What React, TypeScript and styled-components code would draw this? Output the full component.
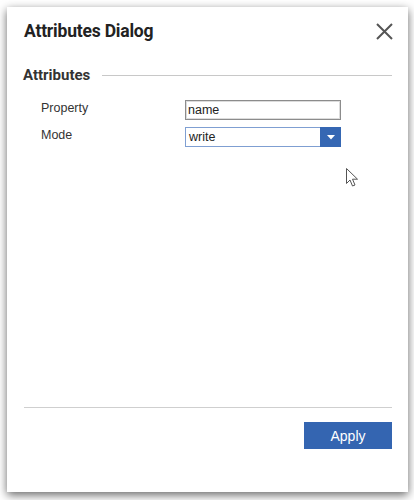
import React from "react";
import styled, { createGlobalStyle } from "styled-components";

const Global = createGlobalStyle`
  html, body { margin: 0; padding: 0; background: #ffffff; }
  body { padding: 7px 6px 8px 7px; font-family: Roboto, "Liberation Sans", Arial, sans-serif; }
  * { box-sizing: border-box; }
`;

const Dialog = styled.div`
  position: relative;
  width: 401px;
  height: 485px;
  background: #ffffff;
  box-shadow: 0 3px 9px rgba(0, 0, 0, 0.6);
  display: flex;
  flex-direction: column;
`;

const Header = styled.div`
  height: 48px;
  display: flex;
  align-items: center;
  justify-content: space-between;
  padding: 0 15px 0 17px;
`;

const Title = styled.h1`
  margin: 0;
  font-family: Roboto, "Liberation Sans", sans-serif;
  font-weight: 700;
  font-size: 17.5px;
  color: #222;
  letter-spacing: -0.2px;
`;

const CloseButton = styled.button`
  border: 0;
  background: transparent;
  padding: 0;
  width: 17px;
  height: 17px;
  display: flex;
  cursor: pointer;
`;

const Body = styled.div`
  flex: 1;
  padding: 10px 16px 0 16px;
  display: flex;
  flex-direction: column;
`;

const SectionTitleRow = styled.div`
  height: 20px;
  display: flex;
  align-items: center;
  gap: 12px;
`;

const SectionTitle = styled.h2`
  margin: 0;
  font-family: Roboto, "Liberation Sans", sans-serif;
  font-weight: 700;
  font-size: 15px;
  color: #333;
`;

const Rule = styled.div`
  flex: 1;
  height: 1px;
  background: #c8c8c8;
`;

const Form = styled.div`
  margin-top: 15px;
  padding-left: 18px;
  display: grid;
  grid-template-columns: 144px 156px;
  row-gap: 7px;
  align-items: center;
`;

const Label = styled.label`
  font-family: "Liberation Sans", Arial, sans-serif;
  font-size: 12.5px;
  color: #333;
  line-height: 20px;
  margin-top: -4px;
`;

const TextInput = styled.input`
  height: 20px;
  width: 156px;
  border: 1px solid #8c8c8c;
  box-shadow: inset 0 0 0 1px #dcdcdc;
  padding: 0 2px;
  font-family: "Liberation Sans", Arial, sans-serif;
  font-size: 12.5px;
  color: #222;
  outline: none;
`;

const Select = styled.div`
  height: 20px;
  width: 156px;
  border: 1px solid #7f9fd2;
  display: flex;
  align-items: stretch;
`;

const SelectValue = styled.div`
  flex: 1;
  padding-left: 3px;
  display: flex;
  align-items: center;
  font-family: "Liberation Sans", Arial, sans-serif;
  font-size: 12.5px;
  color: #222;
`;

const SelectArrow = styled.div`
  width: 21px;
  margin: -1px -1px -1px 0;
  background: #3567b3;
  display: flex;
  align-items: center;
  justify-content: center;
`;

const Footer = styled.div`
  display: flex;
  flex-direction: column;
  padding: 0 16px 43px 17px;
`;

const FooterRule = styled.div`
  height: 1px;
  background: #cfcfcf;
`;

const ButtonRow = styled.div`
  margin-top: 14px;
  display: flex;
  justify-content: flex-end;
`;

const PrimaryButton = styled.button`
  width: 88px;
  height: 27px;
  border: 0;
  background: #3465b1;
  color: #fff;
  font-family: "Liberation Sans", Arial, sans-serif;
  font-size: 14px;
  cursor: pointer;
`;

const Cursor = styled.svg`
  position: absolute;
  left: 339px;
  top: 161px;
`;

export default function App() {
  return (
    <>
      <Global />
      <Dialog>
        <Header>
          <Title>Attributes Dialog</Title>
          <CloseButton aria-label="Close">
            <svg width="17" height="17" viewBox="0 0 17 17">
              <path d="M1 1 L16 16 M16 1 L1 16" stroke="#555" strokeWidth="2" />
            </svg>
          </CloseButton>
        </Header>
        <Body>
          <SectionTitleRow>
            <SectionTitle>Attributes</SectionTitle>
            <Rule />
          </SectionTitleRow>
          <Form>
            <Label>Property</Label>
            <TextInput defaultValue="name" />
            <Label>Mode</Label>
            <Select>
              <SelectValue>write</SelectValue>
              <SelectArrow>
                <svg width="8" height="5" viewBox="0 0 8 5">
                  <path d="M0 0 L8 0 L4 4.5 Z" fill="#fff" />
                </svg>
              </SelectArrow>
            </Select>
          </Form>
        </Body>
        <Footer>
          <FooterRule />
          <ButtonRow>
            <PrimaryButton>Apply</PrimaryButton>
          </ButtonRow>
        </Footer>
        <Cursor width="14" height="20" viewBox="0 0 14 20">
          <path
            d="M0.5 0.5 L0.5 15.5 L4 12 L6.5 18 L9 17 L6.5 11.2 L11.5 11.2 Z"
            fill="#fff"
            stroke="#555"
            strokeWidth="1"
            strokeLinejoin="round"
          />
        </Cursor>
      </Dialog>
    </>
  );
}
